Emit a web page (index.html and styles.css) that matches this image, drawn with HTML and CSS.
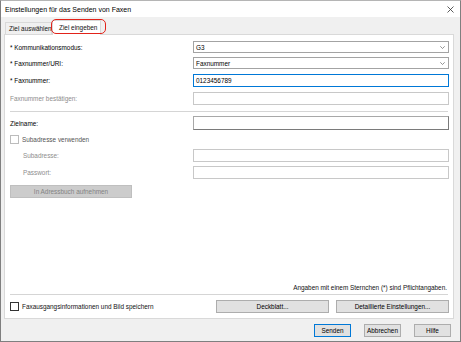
FILE: index.html
```html
<!DOCTYPE html>
<html>
<head>
    <title>Einstellungen für das Senden von Faxen</title>
    <meta name="viewport" content="width=device-width, initial-scale=1">
    <link rel="stylesheet" href="styles.css">
</head>
<body>
    <div class="window">
        <div class="titlebar">
            <span>Einstellungen für das Senden von Faxen</span>
            <svg class="close" width="7" height="7" viewBox="0 0 7 7"><path d="M0.5 0.5L6.5 6.5M6.5 0.5L0.5 6.5" stroke="#333" stroke-width="0.8" fill="none"/></svg>
        </div>
        <div class="content">
            <div class="tabs">
                <div class="tab">Ziel auswählen</div>
                <div class="tab active">Ziel eingeben<span class="mark"></span></div>
            </div>
            <div class="panel">
                <div class="row r-first">
                    <span>* Kommunikationsmodus:</span>
                    <div class="field select">G3<svg width="5" height="3" viewBox="0 0 5 3"><path d="M0.3 0.3L2.5 2.5L4.7 0.3" stroke="#666" stroke-width="0.7" fill="none"/></svg></div>
                </div>
                <div class="row r-tight">
                    <span>* Faxnummer/URI:</span>
                    <div class="field select">Faxnummer<svg width="5" height="3" viewBox="0 0 5 3"><path d="M0.3 0.3L2.5 2.5L4.7 0.3" stroke="#666" stroke-width="0.7" fill="none"/></svg></div>
                </div>
                <div class="row">
                    <span>* Faxnummer:</span>
                    <div class="field focus">0123456789</div>
                </div>
                <div class="row disabled">
                    <span>Faxnummer bestätigen:</span>
                    <div class="field"></div>
                </div>
                <div class="sep"></div>
                <div class="row r-tight">
                    <span>Zielname:</span>
                    <div class="field tall"></div>
                </div>
                <label class="check sub-check"><span class="box light"></span>Subadresse verwenden</label>
                <div class="row disabled">
                    <span class="indent">Subadresse:</span>
                    <div class="field"></div>
                </div>
                <div class="row disabled r-tight">
                    <span class="indent">Passwort:</span>
                    <div class="field"></div>
                </div>
                <button class="btn btn-off">In Adressbuch aufnehmen</button>
                <div class="spacer"></div>
                <div class="note">Angaben mit einem Sternchen (*) sind Pflichtangaben.</div>
                <div class="sep sep-bottom"></div>
                <div class="panel-foot">
                    <label class="check"><span class="box"></span>Faxausgangsinformationen und Bild speichern</label>
                    <div class="foot-buttons">
                        <button class="btn wide">Deckblatt...</button>
                        <button class="btn wide">Detaillierte Einstellungen...</button>
                    </div>
                </div>
            </div>
            <div class="actions">
                <button class="btn small default">Senden</button>
                <button class="btn small">Abbrechen</button>
                <button class="btn small">Hilfe</button>
            </div>
        </div>
    </div>
</body>
</html>
```

FILE: styles.css
```css
* {
    box-sizing: border-box;
}
body {
    margin: 0;
    font-family: "Liberation Sans", Arial, sans-serif;
    font-size: 6.4px;
    color: #000;
}
.window {
    width: 461px;
    height: 342px;
    border: 1px solid #7f7f7f;
    border-top-color: #b5b5b5;
    background: #f0f0f0;
    display: flex;
    flex-direction: column;
}
.titlebar {
    height: 16px;
    background: #fff;
    display: flex;
    align-items: center;
    justify-content: space-between;
    padding: 0 6px 0 4px;
    font-size: 7px;
}
.content {
    flex: 1;
    display: flex;
    flex-direction: column;
    padding: 3px 6px 0 3px;
}
.tabs {
    display: flex;
    align-items: flex-end;
    height: 14px;
    padding-left: 1px;
}
.tab {
    height: 12px;
    width: 47px;
    padding-left: 3px;
    line-height: 11px;
    border: 1px solid #d9d9d9;
    border-bottom: none;
    white-space: nowrap;
    color: #111;
}
.tab.active {
    position: relative;
    height: 15px;
    width: 49px;
    margin-bottom: -1px;
    padding-left: 6px;
    line-height: 14px;
    background: #fff;
    z-index: 1;
}
.mark {
    position: absolute;
    left: -2px;
    right: -6px;
    top: -2px;
    bottom: 1px;
    border: 1.5px solid #e2231a;
    border-radius: 5px;
}
.panel {
    height: 285px;
    background: #fff;
    border: 1px solid #d9d9d9;
    padding: 6px 3px 5px 5px;
    display: flex;
    flex-direction: column;
}
.row {
    display: grid;
    grid-template-columns: 183px 256px;
    align-items: center;
    margin-top: 5px;
}
.row.r-first {
    margin-top: 0;
}
.row.r-tight {
    margin-top: 4px;
}
.row.disabled {
    color: #8d8d8d;
}
.indent {
    padding-left: 13px;
}
.field {
    height: 13px;
    border: 1px solid #c8c8c8;
    background: #fff;
    padding: 0 2px;
    line-height: 11px;
    color: #000;
    display: flex;
    align-items: center;
    justify-content: space-between;
}
.field.select {
    height: 12px;
    border-color: #a3a3a3;
}
.field.select svg {
    margin-right: 1px;
}
.field.focus {
    border-color: #0078d7;
}
.field.tall {
    height: 14px;
    border-color: #a8a8a8 #7a7a7a #7a7a7a #a8a8a8;
}
.sep {
    height: 1px;
    background: #d5d5d5;
    margin: 6px 2px 0 0;
}
.check {
    display: flex;
    align-items: center;
    gap: 3px;
    color: #111;
}
.sub-check {
    margin-top: 5px;
    height: 9px;
    color: #555;
}
.box {
    width: 9px;
    height: 9px;
    border: 1px solid #333;
    background: #fff;
}
.box.light {
    border-color: #bcbcbc;
}
.btn {
    font-family: inherit;
    font-size: 6.4px;
    height: 13px;
    padding: 0;
    background: #e1e1e1;
    border: 1px solid #adadad;
    color: #000;
}
.btn-off {
    margin-top: 6px;
    width: 122px;
    background: #cccccc;
    border-color: #bfbfbf;
    color: #838383;
}
.spacer {
    flex: 1;
}
.note {
    text-align: right;
    line-height: 9px;
    padding-right: 3px;
    color: #111;
}
.sep-bottom {
    margin-top: 2px;
}
.panel-foot {
    display: flex;
    align-items: center;
    justify-content: space-between;
    margin-top: 5px;
    width: 439px;
}
.foot-buttons {
    display: flex;
    gap: 7px;
}
.btn.wide {
    width: 113px;
}
.actions {
    display: flex;
    justify-content: flex-end;
    gap: 13px;
    margin-top: 5px;
    padding-right: 3px;
}
.btn.small {
    width: 37px;
}
.btn.default {
    border-color: #0078d7;
}
```
